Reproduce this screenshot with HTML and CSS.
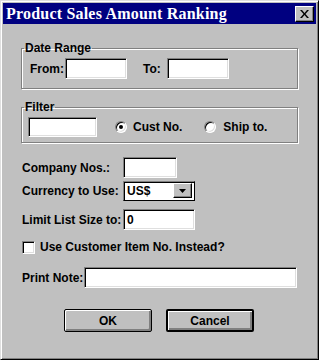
FILE: index.html
```html
<!DOCTYPE html>
<html>
<head>
    <meta charset="UTF-8"/>
    <title>Product Sales Amount Ranking</title>
    <link rel="stylesheet" href="styles.css">
</head>
<body>
<div class="window">
    <div class="titlebar">
        <span class="title">Product Sales Amount Ranking</span>
        <span class="close">
            <svg width="9" height="8" viewBox="0 0 9 8"><path d="M0 0h2l2.5 3 2.5-3h2L5.5 4 9 8H7L4.5 5 2 8H0l3.5-4z" fill="#000"/></svg>
        </span>
    </div>
    <div class="content">
        <fieldset class="group date">
            <legend>Date Range</legend>
            <div class="row">
                <span class="from">From:</span>
                <span class="field w62"></span>
                <span class="to">To:</span>
                <span class="field w62"></span>
            </div>
        </fieldset>
        <fieldset class="group filter">
            <legend>Filter</legend>
            <div class="row">
                <span class="field w69 short"></span>
                <span class="radio on"></span>
                <span class="opt">Cust No.</span>
                <span class="radio second"></span>
                <span class="opt">Ship to.</span>
            </div>
        </fieldset>
        <div class="line first">
            <span class="label">Company Nos.:</span>
            <span class="field w54"></span>
        </div>
        <div class="line mid">
            <span class="label">Currency to Use:</span>
            <span class="combo">
                <span class="value">US$</span>
                <span class="drop">
                    <svg width="7" height="4" viewBox="0 0 7 4"><path d="M0 0h7L3.5 4z" fill="#000"/></svg>
                </span>
            </span>
        </div>
        <div class="line limit">
            <span class="label">Limit List Size to:</span>
            <span class="field w72">0</span>
        </div>
        <div class="line check">
            <span class="box"></span>
            <span class="opt">Use Customer Item No. Instead?</span>
        </div>
        <div class="line note">
            <span class="label narrow">Print Note:</span>
            <span class="field w213"></span>
        </div>
        <div class="buttons">
            <span class="button">OK</span>
            <span class="button default">Cancel</span>
        </div>
    </div>
</div>
</body>
</html>
```

FILE: styles.css
```css
*{
    margin: 0;
    padding: 0;
    box-sizing: border-box;
}
body{
    font-family: "Liberation Sans", Arial, sans-serif;
    font-weight: bold;
    font-size: 12px;
    color: #000;
    background: #c0c0c0;
}
.window{
    width: 319px;
    height: 360px;
    background: #c0c0c0;
    border: 1px solid;
    border-color: #dfdfdf #000 #000 #dfdfdf;
    box-shadow: inset 1px 1px 0 #fff, inset -1px -1px 0 #808080;
    padding: 2px;
}
.titlebar{
    height: 21px;
    background: #000080;
    display: flex;
    align-items: center;
    justify-content: space-between;
    padding: 0 2px 0 3px;
}
.title{
    font-family: "Liberation Serif", "Times New Roman", serif;
    font-size: 16px;
    letter-spacing: 0.2px;
    color: #fff;
}
.close{
    width: 19px;
    height: 16px;
    background: #c0c0c0;
    border: 1px solid;
    border-color: #fff #000 #000 #fff;
    box-shadow: inset -1px -1px 0 #808080;
    display: flex;
    align-items: center;
    justify-content: center;
}
.content{
    padding: 17px 18px 0 18px;
}
.group{
    border: 1px solid #808080;
    box-shadow: inset 1px 1px 0 #fff, 1px 1px 0 #fff;
    width: 277px;
}
.group legend{
    padding: 0 1px;
    line-height: 14px;
}
.date{
    padding: 3px 0 9px 8px;
}
.date legend{
    margin-left: -6px;
}
.filter{
    margin-top: 11px;
    padding: 3px 0 5px 6px;
}
.filter legend{
    margin-left: -4px;
}
.row{
    display: flex;
    align-items: center;
}
.field{
    display: block;
    height: 21px;
    background: #fff;
    border: 1px solid;
    border-color: #808080 #fff #fff #808080;
    box-shadow: inset 1px 1px 0 #000, inset -1px -1px 0 #dfdfdf;
    padding: 3px 0 0 3px;
    line-height: 14px;
}
.short{
    height: 20px;
}
.w62{ width: 62px; }
.w69{ width: 69px; }
.w54{ width: 54px; }
.w72{ width: 72px; }
.w213{ width: 213px; }
.from{
    width: 35px;
}
.to{
    margin-left: 16px;
    width: 24px;
}
.radio{
    width: 12px;
    height: 12px;
    border-radius: 50%;
    border: 1px solid;
    border-color: #808080 #fff #fff #808080;
    box-shadow: inset 1px 1px 0 #000, inset -1px -1px 0 #dfdfdf;
    background: #fff;
    display: flex;
    align-items: center;
    justify-content: center;
    margin-left: 18px;
}
.radio.second{
    margin-left: 22px;
}
.radio.on::after{
    content: "";
    width: 4px;
    height: 4px;
    border-radius: 50%;
    background: #000;
}
.radio + .opt{
    margin-left: 6px;
}
.radio.second + .opt{
    margin-left: 7px;
}
.line{
    display: flex;
    align-items: center;
    padding-left: 1px;
}
.label{
    width: 101px;
}
.label.narrow{
    width: 62px;
}
.first{
    margin-top: 14px;
}
.mid{
    margin-top: 3px;
}
.limit{
    margin-top: 8px;
}
.check{
    margin-top: 10px;
}
.note{
    margin-top: 13px;
}
.combo{
    width: 72px;
    height: 20px;
    background: #fff;
    border: 1px solid;
    border-color: #808080 #000 #000 #808080;
    box-shadow: inset 1px 1px 0 #000;
    display: flex;
    align-items: flex-start;
    justify-content: space-between;
    padding: 1px 2px 0 3px;
}
.value{
    line-height: 16px;
}
.drop{
    width: 19px;
    height: 15px;
    background: #c0c0c0;
    border: 1px solid;
    border-color: #fff #000 #000 #fff;
    box-shadow: inset -1px -1px 0 #808080;
    display: flex;
    align-items: center;
    justify-content: center;
}
.box{
    width: 13px;
    height: 13px;
    background: #fff;
    border: 1px solid;
    border-color: #808080 #fff #fff #808080;
    box-shadow: inset 1px 1px 0 #000, inset -1px -1px 0 #dfdfdf;
}
.box + .opt{
    margin-left: 5px;
}
.buttons{
    display: flex;
    gap: 14px;
    margin-top: 21px;
    padding-left: 43px;
}
.button{
    width: 88px;
    height: 23px;
    border: 1px solid #000;
    border-radius: 2px;
    box-shadow: inset 1px 1px 0 #fff, inset -1px -1px 0 #808080, inset -2px -2px 0 #808080;
    display: flex;
    align-items: center;
    justify-content: center;
}
.button.default{
    border-width: 2px;
}
```
